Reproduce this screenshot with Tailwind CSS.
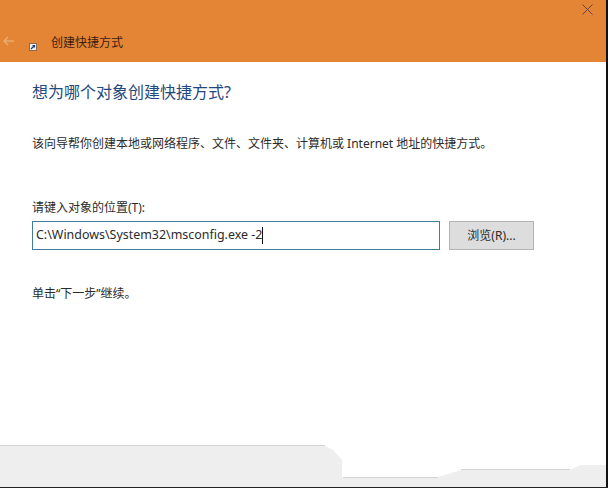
<!DOCTYPE html>
<html lang="zh-CN">
<head>
  <meta charset="UTF-8" />
  <title>创建快捷方式</title>
  <script src="https://cdn.jsdelivr.net/npm/@tailwindcss/browser@4"></script>
</head>
<body class="bg-white">
  <div class="relative w-[608px] h-[488px] overflow-hidden bg-white font-['Noto_Sans','Noto_Sans_CJK_SC',sans-serif] text-[#2b2b2b]">
    <!-- title bar -->
    <header class="relative h-[62px] bg-[#e38534] flex items-end pb-[10px]">
      <svg class="ml-[2px] w-[13px] h-[12px] mb-[5px]" viewBox="0 0 13 12" fill="none" stroke="#eda873" stroke-width="1.5">
        <path d="M12 6H2M6 2 2 6l4 4" />
      </svg>
      <span class="ml-[14px] mb-[1px] w-[8px] h-[8px] bg-[#f1efec] border border-[#8d6b4f] flex items-center justify-center">
        <svg class="w-[6px] h-[6px]" viewBox="0 0 6 6" fill="none" stroke="#1f3f7a" stroke-width="1.2"><path d="M1 5 4.500 1.500M2.500 1.500h2v2" /></svg>
      </span>
      <span class="ml-[14px] text-[12px] leading-[18px] text-[#3d2113]">创建快捷方式</span>
      <svg class="absolute top-[4px] right-[15px] w-[11px] h-[11px]" viewBox="0 0 11 11" fill="none" stroke="#6e4332" stroke-width="1">
        <path d="M.5.5l10 10M10.500.5l-10 10" />
      </svg>
    </header>

    <!-- wizard body -->
    <main class="pl-[32px] pr-[74px]">
      <h1 class="mt-[20px] text-[16px] leading-[20px] text-[#1f4a80]">想为哪个对象创建快捷方式?</h1>
      <p class="mt-[34px] text-[12px] leading-[16px]">该向导帮你创建本地或网络程序、文件、文件夹、计算机或 Internet 地址的快捷方式。</p>
      <label class="block mt-[48px] text-[12px] leading-[16px]">请键入对象的位置(T):</label>
      <div class="mt-[5px] flex gap-[9px]">
        <div class="w-[408px] h-[29px] border border-[#3f7f99] flex items-center pl-[3px] text-[12.450px]">
          <span>C:\Windows\System32\msconfig.exe -2</span><span class="w-px h-[17px] bg-[#111]"></span>
        </div>
        <button type="button" class="w-[85px] h-[29px] bg-[#dddddd] border border-[#b3b3b3] text-[12px]">浏览(R)...</button>
      </div>
      <p class="mt-[36px] text-[12px] leading-[16px]">单击“下一步”继续。</p>
    </main>

    <!-- torn-off grey footer -->
    <svg class="absolute left-0 top-[440px] w-[608px] h-[48px]" viewBox="0 0 608 48">
      <path d="M0 6H325L333 10 342 20V37H438L461 30H570L581 25H606V48H0Z" fill="#eeeeee" />
      <path d="M0 5.500H325M343 37.500H438M461 29.500H570" stroke="#d4d4d4" fill="none" />
      <path d="M0 47H322V48H0Z" fill="#fbeee8" />
    </svg>
    <div class="absolute right-0 top-0 bottom-0 w-[2px] bg-[#111]"></div>
    <div class="absolute left-0 right-0 bottom-0 h-px bg-[#222]"></div>
  </div>
</body>
</html>
